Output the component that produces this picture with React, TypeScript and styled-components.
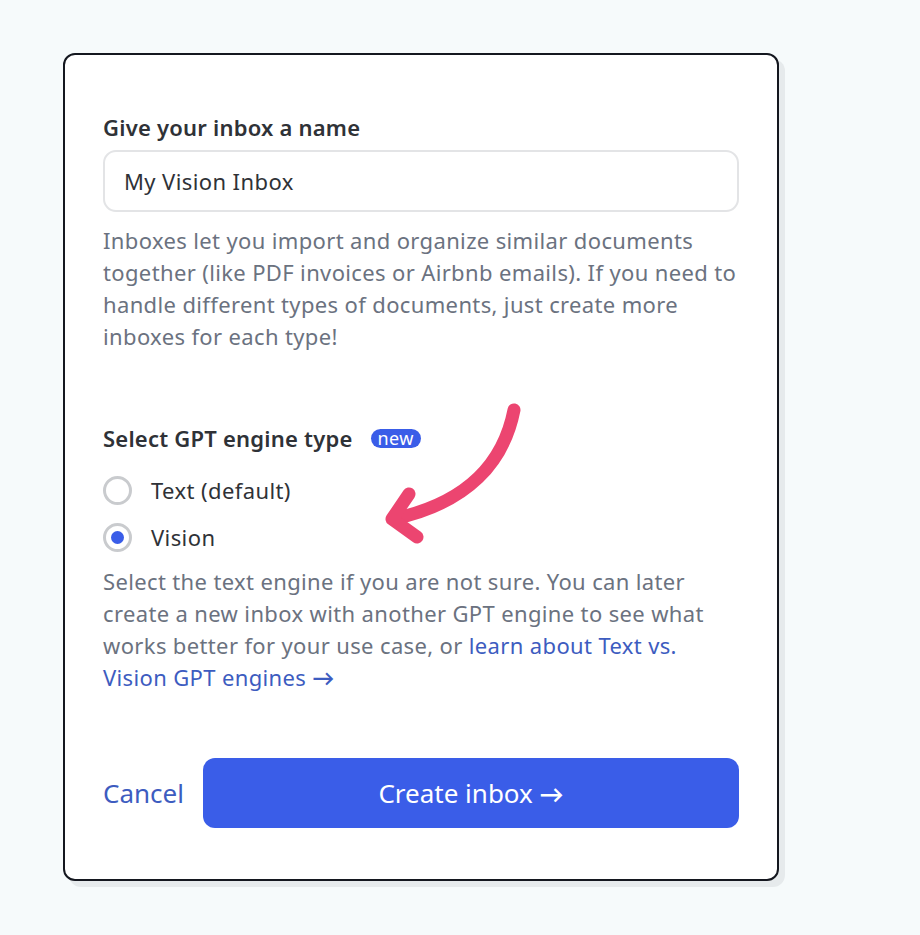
import React from 'react'
import styled, { createGlobalStyle } from 'styled-components'

const GlobalStyle = createGlobalStyle`
  html, body {
    margin: 0;
    padding: 0;
    height: 100%;
    background: #f6fafb;
    font-family: 'Noto Sans', sans-serif;
  }
`

const Page = styled.div`
  height: 935px;
  padding: 53px 0 0 63px;
  box-sizing: border-box;
  overflow: hidden;
`

const Card = styled.form`
  position: relative;
  box-sizing: border-box;
  width: 716px;
  height: 828px;
  padding: 57px 38px 0;
  background: #fff;
  border: 2px solid #14171f;
  border-radius: 12px;
  box-shadow: 6px 6px 0 #e6eaec;
`

const Label = styled.div`
  display: flex;
  align-items: center;
  height: 30px;
  font-size: 22px;
  font-weight: 600;
  letter-spacing: 0.22px;
  color: #2f3237;
`

const NameInput = styled.input`
  display: block;
  box-sizing: border-box;
  width: 100%;
  height: 62px;
  margin-top: 8px;
  padding: 0 19px;
  font: 400 22px 'Noto Sans', sans-serif;
  letter-spacing: 0.4px;
  color: #2f3237;
  background: #fff;
  border: 2px solid #e3e4e6;
  border-radius: 13px;
  outline: none;
`

const Help = styled.p<{ $top: number }>`
  margin: ${(p) => p.$top}px 0 0;
  font-size: 22px;
  line-height: 32px;
  letter-spacing: 0.36px;
  color: #6b7280;
`

const HelpLink = styled.a`
  color: #3d5cc0;
  text-decoration: none;
`

const Arrow = styled.span`
  font-family: 'Lato', sans-serif;
  font-weight: 700;
  letter-spacing: 0;
`

const ButtonArrow = styled(Arrow)`
  font-size: 24px;
`

const EngineLabel = styled(Label)`
  margin-top: 71px;
`

const NewBadge = styled.span`
  display: inline-flex;
  align-items: center;
  height: 19px;
  margin-left: 18px;
  padding: 0 7px;
  font-size: 18px;
  font-weight: 400;
  letter-spacing: 0.4px;
  color: #fff;
  background: #3a5de8;
  border-radius: 10px;
`

const Options = styled.div`
  display: flex;
  flex-direction: column;
  gap: 19px;
  margin-top: 23px;
`

const Option = styled.div`
  display: flex;
  align-items: center;
  gap: 19px;
  height: 28px;
  font-size: 22px;
  letter-spacing: 0.4px;
  color: #2f3237;
`

const Radio = styled.span<{ $checked?: boolean }>`
  display: flex;
  align-items: center;
  justify-content: center;
  box-sizing: border-box;
  width: 29px;
  height: 29px;
  border: 3px solid #c9cbce;
  border-radius: 50%;

  &::after {
    content: '';
    display: ${(p) => (p.$checked ? 'block' : 'none')};
    width: 13px;
    height: 13px;
    background: #3a5de8;
    border-radius: 50%;
  }
`

const Actions = styled.div`
  display: flex;
  align-items: center;
  margin-top: 64px;
`

const Cancel = styled.a`
  width: 100px;
  font-size: 26px;
  color: #3d5cc0;
`

const Submit = styled.button`
  flex: 1;
  height: 70px;
  font: 400 26px 'Noto Sans', sans-serif;
  color: #fff;
  background: #3a5de8;
  border: 0;
  border-radius: 12px;
`

const ArrowDrawing = styled.svg`
  position: absolute;
  left: 320px;
  top: 346px;
  width: 140px;
  height: 145px;
  overflow: visible;
`

const App: React.FC = () => {
  return (
    <Page>
      <GlobalStyle />
      <Card>
        <Label>Give your inbox a name</Label>
        <NameInput defaultValue="My Vision Inbox" />
        <Help $top={12}>
          Inboxes let you import and organize similar documents together (like PDF invoices or
          Airbnb emails). If you need to handle different types of documents, just create more
          inboxes for each type!
        </Help>
        <EngineLabel>
          Select GPT engine type <NewBadge>new</NewBadge>
        </EngineLabel>
        <Options>
          <Option>
            <Radio />
            Text (default)
          </Option>
          <Option>
            <Radio $checked />
            Vision
          </Option>
        </Options>
        <Help $top={14}>
          Select the text engine if you are not sure. You can later create a new inbox with another
          GPT engine to see what works better for your use case, or{' '}
          <HelpLink>
            learn about Text vs. Vision GPT engines <Arrow>→</Arrow>
          </HelpLink>
        </Help>
        <Actions>
          <Cancel>Cancel</Cancel>
          <Submit type="button">
            Create inbox <ButtonArrow>→</ButtonArrow>
          </Submit>
        </Actions>
        <ArrowDrawing viewBox="0 0 140 145" fill="none" stroke="#ec4570" strokeWidth="13" strokeLinecap="round" strokeLinejoin="round">
          <path d="M129 9 C 119 60, 84 102, 8 118" />
          <path d="M24 93 L 7 118 L 32 136" />
        </ArrowDrawing>
      </Card>
    </Page>
  )
}

export default App
